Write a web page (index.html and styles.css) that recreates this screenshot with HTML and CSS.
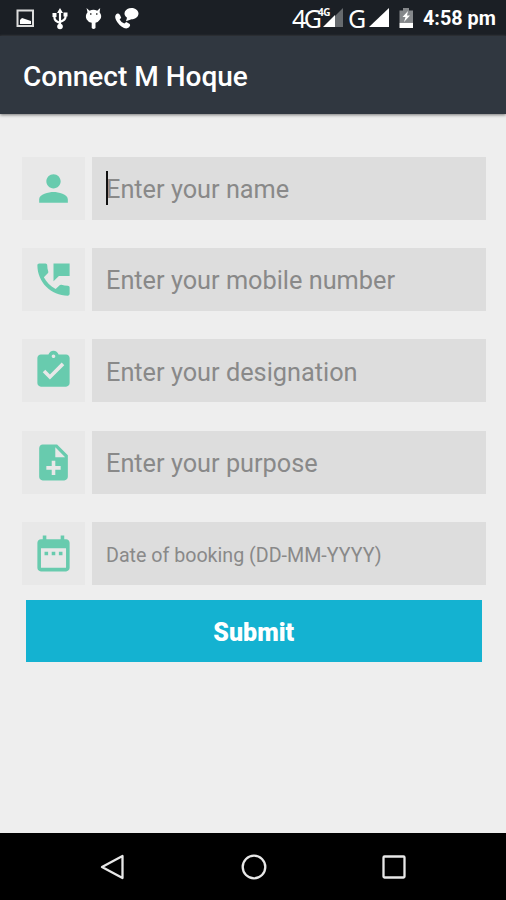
FILE: index.html
```html
<!DOCTYPE html>
<html lang="en">
<head>
<meta charset="utf-8">
<title>Connect M Hoque</title>
<link rel="stylesheet" href="styles.css">
</head>
<body>
<div class="status">
  <svg class="notifications" width="146" height="36" viewBox="0 0 146 36">
    <path class="frame" d="M17.500 10.500h15.500v15.500H17.500z"/>
    <path d="M20 24v-4l2-2 3 1 3 1 3 1v3z"/>
    <path class="usb" d="M60 12v14M54.500 15v3q0 3 5.500 5M65.500 14v3q0 3-5.500 5"/>
    <path d="M60 8l-3 5h6zM52.500 13h4v4h-4zM63.500 12.500h4v4h-4z"/><circle cx="60" cy="26.500" r="2.800"/>
    <path d="M86.500 8l3 2.700q4-1.800 7.700 0l3-2.700-.6 4.200q3 4 .4 7.400-1.500 2.500-4.500 3.100V28q-2 2-3.800 0v-5.300q-3.700-.5-5-3.100-2-3.900.8-7.400z"/>
    <path class="eyes" d="M90 14h1.500M96 14h1.500"/>
    <path d="M116 14.500q2-2 4 .5l1.200 2.700-1.600 1.800q1.800 3.200 4.700 4.100l2-1.700 3.500 2q1 1.500-.7 3.400-3 2.500-7.600-.8-5-3.800-6.200-8.500-.5-2.500.7-3.500z"/>
    <path d="M131.500 8c4 0 7 2.500 7 5.500s-3 5.800-7 5.800l-5.500 2 1-3.500c-5-3.500-2-9.800 4.500-9.800z"/>
  </svg>
  <div class="signals">
    <span class="network network-4g">4G<sup>4G</sup></span>
    <span class="network network-g">G</span>
    <svg width="96" height="36" viewBox="320 0 96 36">
      <path class="muted" d="M335 16l8-8v19h-8z"/><path d="M323 27l12-12v12z"/>
      <path d="M369 27l20-19v19z"/>
      <path class="battery" d="M399.500 10.500h3.500V8h6v2.500h4V22h-13.500z"/><path d="M399.500 22.500H413V28h-13.500zM408 11l-5.500 6h3l-1.500 5 6-6.500h-3z"/>
    </svg>
  </div>
  <time class="clock">4:58 pm</time>
</div>
<header class="header"><h1>Connect M Hoque</h1></header>
<main class="content">
  <form class="form">
    <div class="row">
      <span class="icon"><svg viewBox="0 0 24 24"><path d="M12 12c2.210 0 4-1.790 4-4s-1.790-4-4-4-4 1.790-4 4 1.790 4 4 4zm0 2c-2.670 0-8 1.340-8 4v2h16v-2c0-2.660-5.330-4-8-4z"/></svg></span>
      <div class="field active"><span>Enter your name</span></div>
    </div>
    <div class="row">
      <span class="icon"><svg viewBox="0 0 24 24"><path d="M20 15.500c-1.250 0-2.450-.2-3.570-.57-.35-.11-.74-.03-1.020.24l-2.200 2.200c-2.830-1.440-5.150-3.750-6.590-6.580l2.200-2.210c.28-.27.36-.66.25-1.010C8.700 6.450 8.500 5.250 8.500 4c0-.55-.45-1-1-1H4c-.55 0-1 .45-1 1 0 9.390 7.610 17 17 17 .55 0 1-.45 1-1v-3.500c0-.55-.45-1-1-1zM12 3v10l3-3h6V3h-9z"/></svg></span>
      <div class="field"><span>Enter your mobile number</span></div>
    </div>
    <div class="row">
      <span class="icon"><svg viewBox="0 0 24 24"><path d="M19 3h-4.180C14.400 1.840 13.300 1 12 1c-1.300 0-2.400.84-2.820 2H5c-1.100 0-2 .9-2 2v14c0 1.100.9 2 2 2h14c1.100 0 2-.9 2-2V5c0-1.100-.9-2-2-2zm-7 0c.55 0 1 .45 1 1s-.45 1-1 1-1-.45-1-1 .45-1 1-1zm-2 14l-4-4 1.410-1.410L10 14.170l6.590-6.590L18 9l-8 8z"/></svg></span>
      <div class="field"><span>Enter your designation</span></div>
    </div>
    <div class="row">
      <span class="icon"><svg viewBox="0 0 24 24"><path d="M14 2H6c-1.100 0-1.990.9-1.990 2L4 20c0 1.100.89 2 1.990 2H18c1.100 0 2-.9 2-2V8l-6-6zm2 14h-3v3h-2v-3H8v-2h3v-3h2v3h3v2zm-3-7V3.500L18.500 9H13z"/></svg></span>
      <div class="field"><span>Enter your purpose</span></div>
    </div>
    <div class="row">
      <span class="icon"><svg viewBox="0 0 24 24"><path d="M9 11H7v2h2v-2zm4 0h-2v2h2v-2zm4 0h-2v2h2v-2zm2-7h-1V2h-2v2H8V2H6v2H5c-1.110 0-1.990.9-1.990 2L3 20c0 1.100.89 2 2 2h14c1.100 0 2-.9 2-2V6c0-1.100-.9-2-2-2zm0 16H5V9h14v11z"/></svg></span>
      <div class="field date"><span>Date of booking (DD-MM-YYYY)</span></div>
    </div>
    <button class="submit" type="button">Submit</button>
  </form>
</main>
<nav class="nav">
  <svg viewBox="0 0 28 28"><path d="M3 14L23.500 3v22z"/></svg>
  <svg viewBox="0 0 28 28"><circle cx="14" cy="14" r="11.300"/></svg>
  <svg viewBox="0 0 28 28"><rect x="3.500" y="3.500" width="21" height="21" rx="1"/></svg>
</nav>
</body>
</html>
```
FILE: styles.css
```css
* { box-sizing: border-box; }

body {
  display: flex;
  flex-direction: column;
  width: 506px;
  height: 900px;
  margin: 0;
  overflow: hidden;
  background: #eee;
  font-family: Roboto, sans-serif;
}

svg { display: block; flex: none; }

.status {
  display: flex;
  height: 36px;
  flex: none;
  background: #1b1f25;
  color: #fff;
}

.status svg { fill: #fff; }
.status .frame { fill: none; stroke: #ddd; stroke-width: 2; }
.status .usb { fill: none; stroke: #fff; stroke-width: 2.2; }
.status .eyes { stroke: #333; stroke-width: 1.5; }
.status .muted { fill: #666a6e; }
.status .battery { fill: #85888b; }

.signals {
  position: relative;
  width: 270px;
  margin-left: 4px;
}

.signals svg { margin-left: 170px; }

.network {
  position: absolute;
  top: 3px;
  font: 25px/30px "Noto Sans", sans-serif;
}

.network-4g { left: 142px; letter-spacing: -2.5px; }
.network-g { left: 198px; }

.network sup {
  position: absolute;
  top: 4px;
  left: 26px;
  font-size: 10px;
  font-weight: 700;
  line-height: 10px;
  letter-spacing: -0.5px;
}

.clock {
  margin-left: 3px;
  font-size: 19.8px;
  font-weight: 700;
  line-height: 38px;
  white-space: nowrap;
}

.header {
  z-index: 1;
  display: flex;
  align-items: center;
  height: 78px;
  flex: none;
  padding: 3px 23px 0;
  background: #303740;
  box-shadow: 0 1px 3px #777;
  color: #fff;
}

.header h1 {
  margin: 0;
  font-size: 28px;
  font-weight: 500;
  white-space: nowrap;
}

.content { flex: 1; padding: 42.6px 20.5px 0 22px; }

.form { display: flex; flex-direction: column; gap: 28.4px; }

.row { display: flex; gap: 7px; height: 63px; }

.icon {
  display: flex;
  align-items: center;
  justify-content: center;
  width: 63px;
  background: #e8e8e8;
}

.icon svg { width: 43px; height: 43px; fill: #68cbae; }

.field {
  display: flex;
  flex: 1;
  align-items: center;
  padding: 3px 14px 0;
  background: #ddd;
  color: #898989;
  font-size: 25.3px;
  white-space: nowrap;
}

.field.active { position: relative; }

.field.active::before {
  content: "";
  position: absolute;
  top: 14px;
  left: 14px;
  width: 2px;
  height: 34px;
  background: #111;
}

.field.date { font-size: 19.65px; }

.submit {
  height: 62.4px;
  margin: -14px 4px 0;
  padding: 4px 0 0;
  border: 0;
  background: #14b2d1;
  color: #fff;
  font: 900 25px Roboto, sans-serif;
}

.nav {
  display: flex;
  align-items: center;
  justify-content: center;
  gap: 112.500px;
  height: 67px;
  flex: none;
  padding-left: 1px;
  background: #000;
}

.nav svg {
  width: 28px;
  height: 28px;
  fill: none;
  stroke: #e8e8e8;
  stroke-width: 2.3;
  stroke-linejoin: round;
}
```
